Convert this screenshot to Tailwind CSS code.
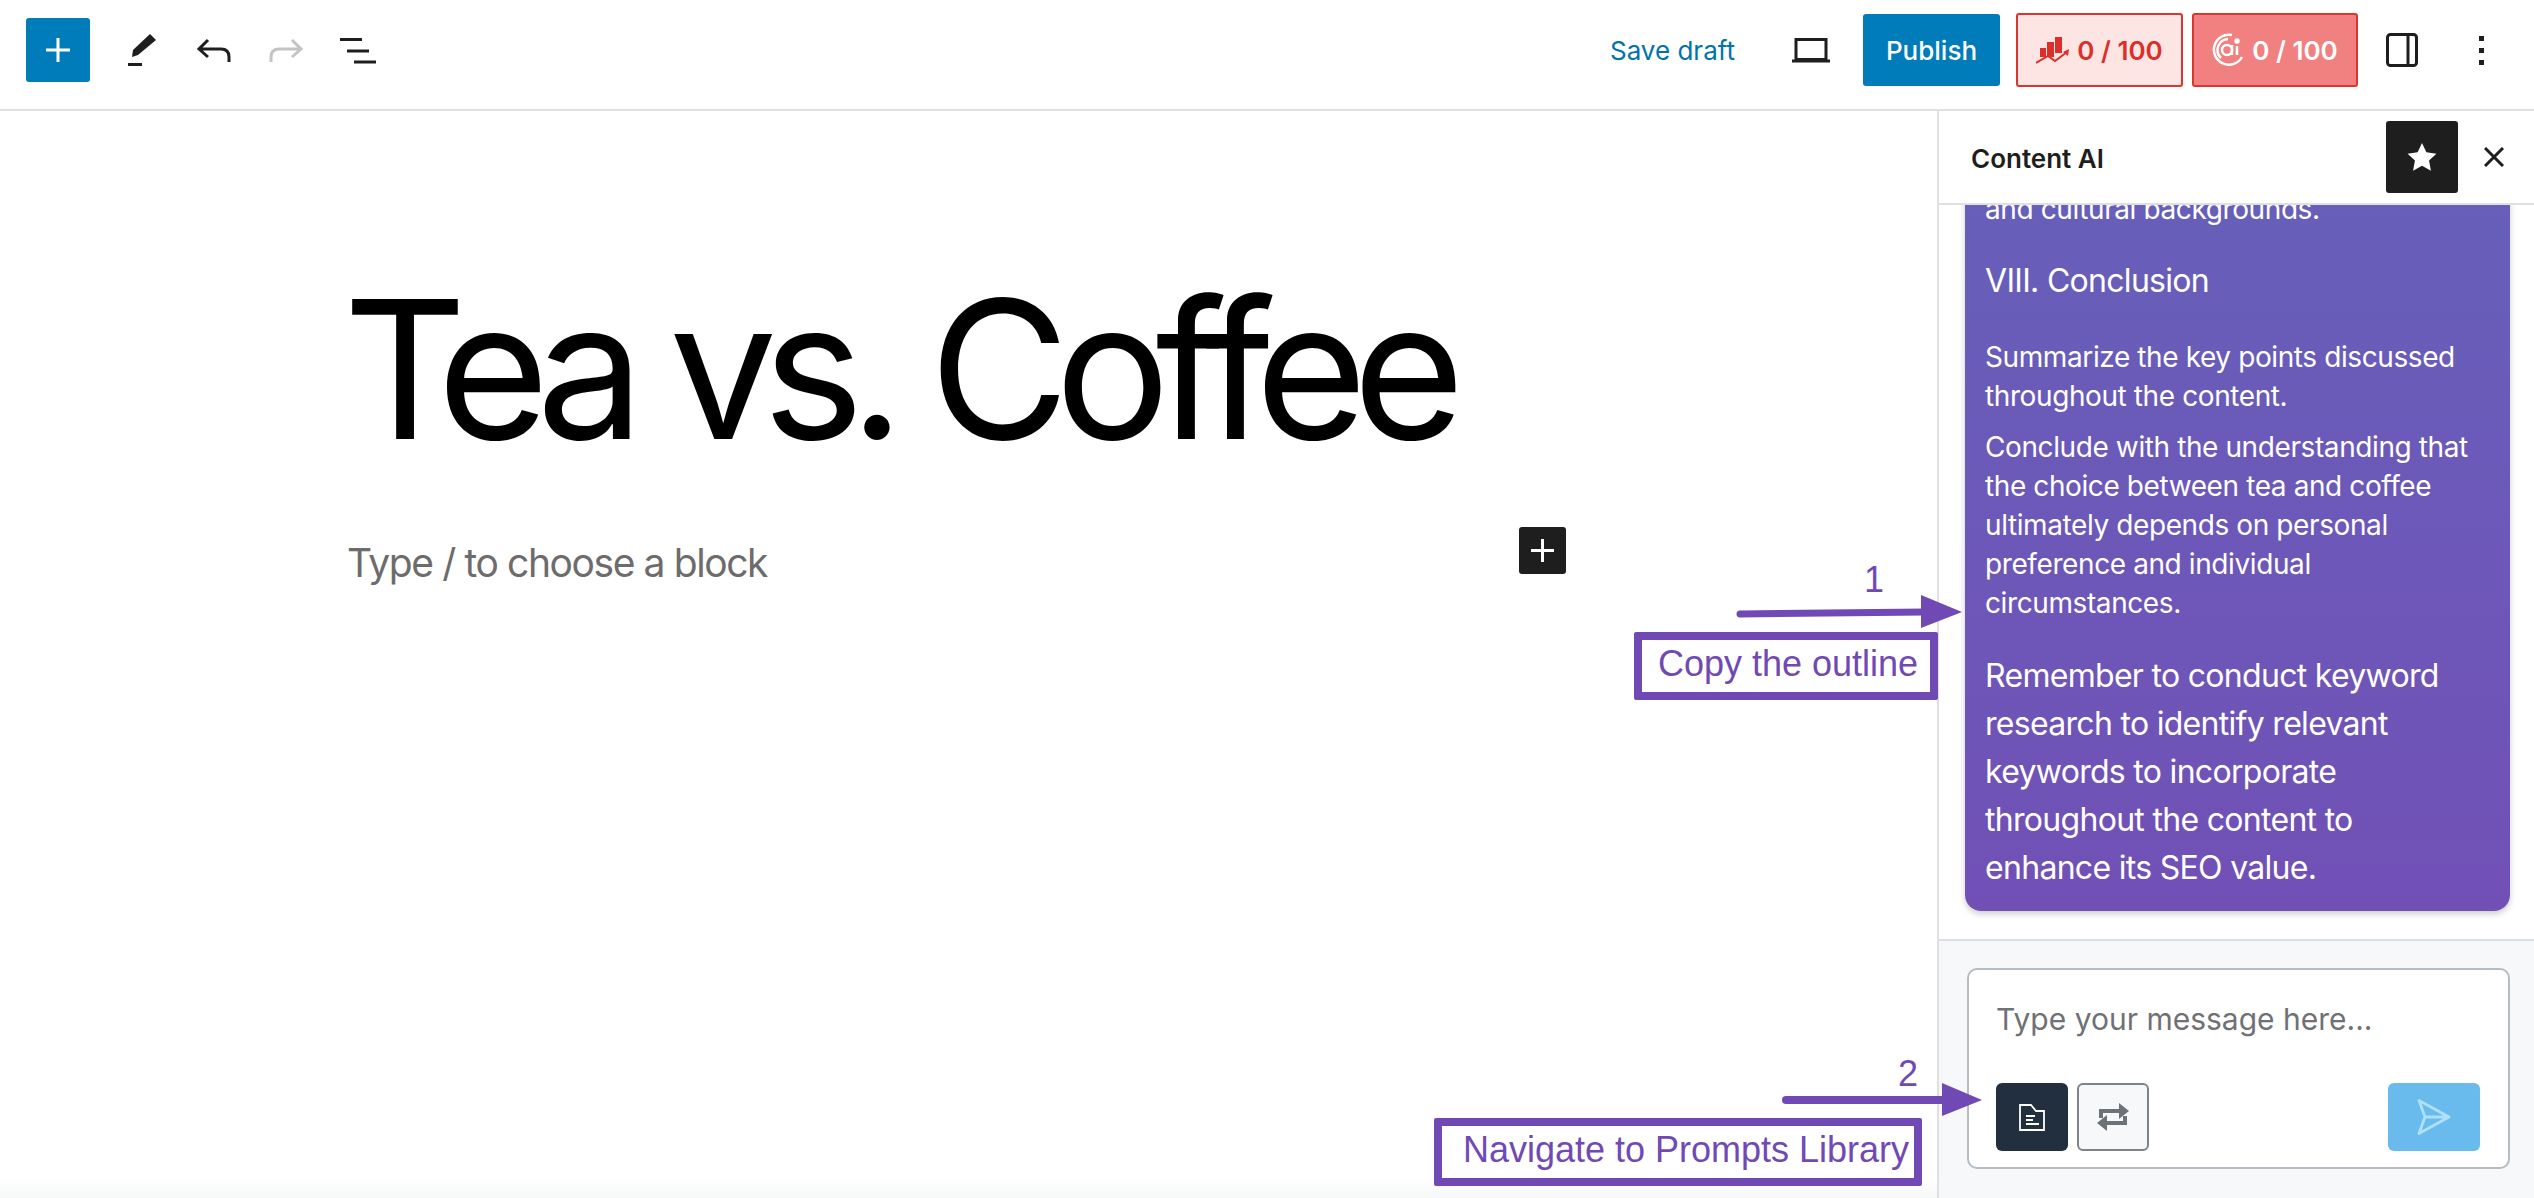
<!DOCTYPE html>
<html lang="en">
<head>
    <meta charset="UTF-8">
    <title>Tea vs. Coffee</title>
    <script src="https://cdn.jsdelivr.net/npm/@tailwindcss/browser@4"></script>
</head>
<body class="relative h-[1198px] w-[2534px] overflow-hidden bg-white font-['Inter',sans-serif] text-[#1e1e1e]">
    <!-- Top toolbar -->
    <header class="flex h-[111px] items-center justify-between border-b-2 border-[#e0e0e0] pb-[9px] pl-[26px] pr-[49px]">
        <div class="flex items-center">
            <button class="flex h-[64px] w-[64px] items-center justify-center rounded-[3px] bg-[#007cba]">
                <svg class="h-[26px] w-[26px]" viewBox="0 0 26 26" fill="none" stroke="#fff" stroke-width="3"><path d="M13 1v24M1 13h24"/></svg>
            </button>
            <svg class="ml-[36px] h-[32px] w-[32px]" viewBox="0 0 32 32" fill="#1e1e1e"><path d="M6 23 L7 16 L24 0 L30 6 L12 21Z"/><rect x="2" y="29" width="14" height="3"/></svg>
            <svg class="ml-[38px] h-[32px] w-[36px]" viewBox="0 0 36 32" fill="none" stroke="#1e1e1e" stroke-width="3"><path d="M12 6 L3 15 L12 23M3 15H25Q33 15 33 23V28"/></svg>
            <svg class="ml-[36px] h-[32px] w-[36px]" viewBox="0 0 36 32" fill="none" stroke="#c4c4c4" stroke-width="3"><path d="M24 6 L33 15 L24 23M33 15H11Q3 15 3 23V28"/></svg>
            <svg class="ml-[36px] h-[32px] w-[38px]" viewBox="0 0 38 32" fill="#1e1e1e"><rect x="0" y="4" width="22" height="3"/><rect x="7" y="15.500" width="22" height="3"/><rect x="14" y="26.500" width="22" height="3"/></svg>
        </div>
        <div class="flex items-center">
            <span class="text-[26px] text-[#0073aa]">Save draft</span>
            <svg class="ml-[56px] h-[32px] w-[40px]" viewBox="0 0 40 32" fill="none" stroke="#1e1e1e" stroke-width="3"><path d="M5 5.500h30v20H5z"/><path d="M1 27h38"/></svg>
            <button class="ml-[32px] h-[72px] w-[137px] rounded-[3px] bg-[#007cba] text-[26px] font-medium text-white">Publish</button>
            <div class="ml-[16px] flex h-[74px] w-[167px] items-center justify-center gap-[8px] rounded-[3px] border-2 border-[#d9362f] bg-[#fde5e3] text-[26px] font-semibold text-[#dc2f2a]">
                <svg class="h-[28px] w-[33px]" viewBox="0 0 33 28" fill="#dc2f2a"><path d="M4 12h6v9H4zM11 6h7v15h-7zM19 1h7v16h-7z"/><path d="M0 27l12-7 7 5 12-9" fill="none" stroke="#dc2f2a" stroke-width="2"/><path d="M33 13l-1 7-5-4z"/></svg>
                <span>0 / 100</span>
            </div>
            <div class="ml-[9px] flex h-[74px] w-[166px] items-center justify-center gap-[8px] rounded-[3px] border-2 border-[#d9362f] bg-[#f08180] text-[26px] font-semibold text-white">
                <svg class="h-[34px] w-[32px]" viewBox="0 0 32 34" fill="none" stroke="#fff" stroke-width="2.500"><path d="M20 2A15 15 0 1 0 30 24"/><path d="M16 6A11 11 0 0 0 9 25"/><circle cx="15" cy="17" r="5"/><path d="M20 12v10M25 13v9"/><circle cx="25" cy="8" r="1.500" fill="#fff"/></svg>
                <span>0 / 100</span>
            </div>
            <svg class="ml-[28px] h-[34px] w-[32px]" viewBox="0 0 32 34" fill="none" stroke="#1e1e1e" stroke-width="3"><rect x="1.500" y="1.500" width="29" height="31" rx="3"/><path d="M22 2v30" /></svg>
            <svg class="ml-[61px] h-[34px] w-[6px]" viewBox="0 0 6 34" fill="#1e1e1e"><rect x="0" y="3" width="5" height="5"/><rect x="0" y="15" width="5" height="5"/><rect x="0" y="27" width="5" height="5"/></svg>
        </div>
    </header>

    <div class="flex h-[1087px]">
        <!-- Editor canvas -->
        <main class="relative w-[1937px] shrink-0 bg-gradient-to-b from-white from-[98%] to-[#f7f8f8]">
            <h1 class="pl-[343px] pt-[143px] text-[192px] font-normal leading-[230px] tracking-[-14.600px] text-black">Tea vs. Coffee</h1>
            <p class="pl-[347px] pt-[51px] text-[39px] leading-[56px] tracking-[-1.400px] text-[#6c6c6c]">Type / to choose a block</p>
            <button class="absolute left-[1519px] top-[416px] flex h-[47px] w-[47px] items-center justify-center rounded-[3px] bg-[#1e1e1e]">
                <svg class="h-[25px] w-[25px]" viewBox="0 0 25 25" fill="none" stroke="#fff" stroke-width="3"><path d="M12.500 1v23M1 12.500h23"/></svg>
            </button>
        </main>

        <!-- Content AI sidebar -->
        <aside class="flex w-[597px] shrink-0 flex-col border-l-2 border-[#e0e0e0]">
            <div class="flex h-[94px] shrink-0 items-center justify-between border-b-2 border-[#e0e0e0] pl-[32px] pr-[30px]">
                <span class="pt-[2px] text-[26px] font-semibold">Content AI</span>
                <div class="flex items-center gap-[26px]">
                    <button class="flex h-[72px] w-[72px] items-center justify-center rounded-[3px] bg-[#1e1e1e]">
                        <svg class="h-[32px] w-[32px]" viewBox="0 0 24 24" fill="#fff"><path d="M12 1.500l3.300 7 7.500 1-5.500 5.200 1.400 7.600L12 18.600l-6.700 3.700 1.400-7.600L1.200 9.500l7.500-1z"/></svg>
                    </button>
                    <svg class="h-[20px] w-[20px]" viewBox="0 0 20 20" fill="none" stroke="#1e1e1e" stroke-width="3"><path d="M1 1l18 18M19 1L1 19"/></svg>
                </div>
            </div>
            <div class="flex min-h-0 flex-1 flex-col justify-end overflow-hidden pb-[28px] pl-[26px] pr-[24px]">
                <div class="shrink-0 rounded-b-[16px] bg-gradient-to-b from-[#675fba] to-[#7150b6] px-[20px] pb-[19px] text-white shadow-[0_3px_6px_rgba(0,0,0,0.2)]">
                    <p class="text-[28px] leading-[39px] tracking-[-0.400px]">and cultural backgrounds.</p>
                    <h3 class="mt-[28px] text-[32px] leading-[48px] tracking-[-0.700px]">VIII. Conclusion</h3>
                    <p class="mt-[33px] text-[28px] leading-[39px] tracking-[-0.400px]">Summarize the key points discussed throughout the content.</p>
                    <p class="mt-[12px] text-[28px] leading-[39px] tracking-[-0.400px]">Conclude with the understanding that the choice between tea and coffee ultimately depends on personal preference and individual circumstances.</p>
                    <p class="mt-[29px] pr-[40px] text-[32px] leading-[48px] tracking-[-0.700px]">Remember to conduct keyword research to identify relevant keywords to incorporate throughout the content to enhance its SEO value.</p>
                </div>
            </div>
            <div class="h-[259px] shrink-0 border-t-2 border-[#dcdfe3] bg-[#f7f8fa] pl-[28px] pr-[24px] pt-[27px]">
                <div class="flex h-[201px] flex-col justify-between rounded-[10px] border-2 border-[#b6bcc4] bg-white pb-[16px] pl-[27px] pr-[28px] pt-[29px]">
                    <p class="text-[30px] leading-[40px] text-[#6f7175]">Type your message here...</p>
                    <div class="flex items-center">
                        <button class="flex h-[68px] w-[72px] items-center justify-center rounded-[6px] bg-[#212f3f]">
                            <svg class="h-[27px] w-[26px]" viewBox="0 0 26 27" fill="none" stroke="#fff" stroke-width="1.800"><path d="M1 1h11l5 6h8v19H1z"/><path d="M7 12h9M7 16h7M7 20h13"/></svg>
                        </button>
                        <button class="ml-[9px] flex h-[68px] w-[72px] items-center justify-center rounded-[6px] border-2 border-[#7e8388] bg-[#f7f8fa]">
                            <svg class="h-[30px] w-[32px]" viewBox="0 0 32 30" fill="none" stroke="#6c7278" stroke-width="4"><path d="M4 16V9h19M28 14v7H9"/><path d="M22 1l10 8-10 8z" fill="#6c7278" stroke="none"/><path d="M10 13L0 21l10 8z" fill="#6c7278" stroke="none"/></svg>
                        </button>
                        <button class="ml-auto flex h-[68px] w-[92px] items-center justify-center rounded-[6px] bg-[#69bbed]">
                            <svg class="h-[36px] w-[34px]" viewBox="0 0 34 36" fill="none" stroke="#aee0fa" stroke-width="2.800" stroke-linejoin="round"><path d="M2 1.500L32 18 2 34.500 8 18zM8 18h24"/></svg>
                        </button>
                    </div>
                </div>
            </div>
        </aside>
    </div>

    <!-- Annotations laid over the screenshot -->
    <svg class="absolute left-[1730px] top-[570px] h-[70px] w-[240px]" viewBox="0 0 240 70" fill="#7049b5"><path d="M10 44 L195 42" stroke="#7049b5" stroke-width="7" stroke-linecap="round"/><path d="M191 25 L232 42 L191 58z"/></svg>
    <span class="absolute left-[1864px] top-[558px] font-['Liberation_Sans',sans-serif] text-[36px] leading-[44px] text-[#7049b5]">1</span>
    <div class="absolute left-[1634px] top-[632px] flex h-[68px] w-[304px] items-center justify-center rounded-[2px] border-[8px] border-[#7049b5] bg-white pb-[4px] pl-[4px] font-['Liberation_Sans',sans-serif] text-[36px] text-[#7049b5]">Copy the outline</div>

    <svg class="absolute left-[1780px] top-[1060px] h-[70px] w-[210px]" viewBox="0 0 210 70" fill="#7049b5"><path d="M6 40 H165" stroke="#7049b5" stroke-width="8" stroke-linecap="round"/><path d="M162 23 L202 40 L162 56z"/></svg>
    <span class="absolute left-[1898px] top-[1052px] font-['Liberation_Sans',sans-serif] text-[36px] leading-[44px] text-[#7049b5]">2</span>
    <div class="absolute left-[1434px] top-[1118px] flex h-[68px] w-[488px] items-center justify-center rounded-[2px] border-[8px] border-[#7049b5] bg-white pb-[4px] pl-[16px] font-['Liberation_Sans',sans-serif] text-[36px] text-[#7049b5]">Navigate to Prompts Library</div>
</body>
</html>
